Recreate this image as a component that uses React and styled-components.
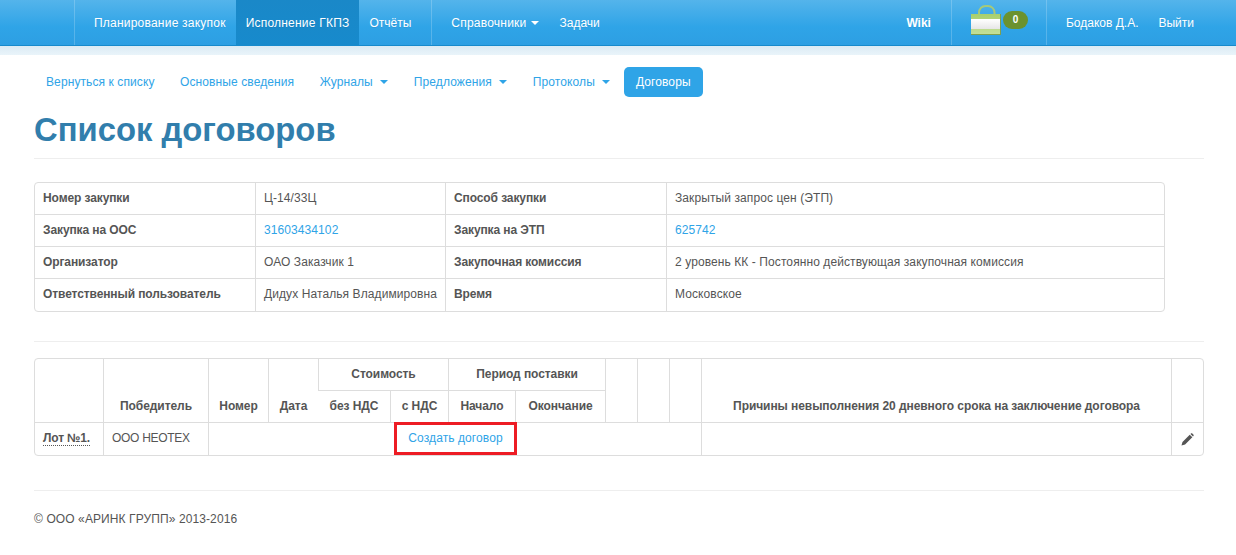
import React from 'react'
import styled, { createGlobalStyle } from 'styled-components'

const GlobalStyle = createGlobalStyle`
  body {
    margin: 0;
    background: #fff;
    font-family: "Liberation Sans", Arial, sans-serif;
    font-size: 12px;
    line-height: 18px;
    color: #555;
  }
`

const Topbar = styled.div`
  display: flex;
  height: 45px;
  padding: 0 32px 0 74px;
  background: linear-gradient(#54b4eb, #2fa4e7 60%, #2d9fe3);
  border-bottom: 1px solid #178acc;
`

const NavGroup = styled.div`
  display: flex;
  border-left: 1px solid ${props => props.$noline ? 'transparent' : 'rgba(255,255,255,.2)'};
  padding: ${props => props.$pad || '0 10px 0 9px'};
  margin-left: ${props => props.$left || 0};
`

const NavItem = styled.a`
  display: flex;
  align-items: center;
  gap: 5px;
  padding: 0 10px;
  color: #fff;
  text-shadow: 0 1px 0 rgba(0,0,0,.08);
  background: ${props => props.$active ? 'linear-gradient(#1a88c8, #178acc)' : 'none'};
  font-weight: ${props => props.$bold ? 'bold' : 'normal'};
  letter-spacing: ${props => props.$wide ? '.22px' : 'normal'};
`

const Caret = styled.span`
  display: inline-block;
  width: 0;
  height: 0;
  border-left: 4px solid transparent;
  border-right: 4px solid transparent;
  border-top: 4px solid ${props => props.$color || '#fff'};
`

const Cart = styled.div`
  display: flex;
  align-items: center;
  padding: 0 18px 0 19px;
  border-left: 1px solid rgba(255,255,255,.2);
  border-right: 1px solid rgba(255,255,255,.2);
`

const Bag = styled.svg`
  margin-bottom: 4px;
`

const CartBadge = styled.span`
  width: 25px;
  height: 18px;
  margin: 0 0 5px 1px;
  border-radius: 9px;
  background: #6b922f;
  color: #fff;
  font-size: 10px;
  font-weight: bold;
  line-height: 17px;
  text-align: center;
`

const Band = styled.div`
  height: 9px;
  background: linear-gradient(#dcebf4, #e9f4fa);
`

const Container = styled.div`
  padding: 12px 32px 0 34px;
`

const Pills = styled.div`
  display: flex;
  gap: 1.5px;
`

const Pill = styled.a`
  display: flex;
  align-items: center;
  gap: 7.5px;
  height: 30px;
  padding: 0 12px;
  border-radius: 5px;
  letter-spacing: .1px;
  color: ${props => props.$active ? '#fff' : '#2fa4e7'};
  background: ${props => props.$active ? '#2fa4e7' : 'none'};
`

const Title = styled.h1`
  margin: 14px 0 0;
  padding-bottom: 10px;
  border-bottom: 1px solid #eee;
  color: #317eac;
  font-size: 32.8px;
  font-weight: bold;
  line-height: 37px;
`

const Table = styled.table`
  width: ${props => props.$width}px;
  table-layout: fixed;
  border-collapse: separate;
  border-spacing: 0;
  border: 1px solid #ddd;
  border-radius: 4px;
`

const Cell = styled.td`
  height: 32px;
  padding: 0 8px 2px;
  box-sizing: border-box;
  border-left: 1px solid #ddd;
  border-bottom: 1px solid #ddd;
  tbody tr:last-child > & { border-bottom: 0; }
  &:first-child { border-left: 0; }
  font-weight: ${props => props.$bold ? 'bold' : 'normal'};
  letter-spacing: ${props => props.$tight ? '-.3px' : props.$bold ? '-.1px' : '.09px'};
  text-align: ${props => props.$align || 'left'};
  vertical-align: middle;
  white-space: nowrap;
`

const HeadCell = styled.th`
  height: 32px;
  padding: 0 8px 7px;
  box-sizing: border-box;
  border-left: 1px solid #ddd;
  border-bottom: 1px solid #ddd;
  &:first-child { border-left: 0; }
  letter-spacing: -.07px;
  text-align: center;
  vertical-align: bottom;
  white-space: nowrap;
`

const Link = styled.a`
  color: #2fa4e7;
`

const InfoBlock = styled.div`
  margin-top: 23px;
`

const Rule = styled.div`
  height: 1px;
  background: #eee;
  margin: ${props => props.$margin};
`

const LotName = styled.span`
  font-weight: bold;
  letter-spacing: -.15px;
  border-bottom: 1px dotted #555;
`

const ActionCell = styled(Cell)`
  padding: 0 0 0 185px;
`

const Marked = styled.span`
  display: inline-block;
  box-sizing: border-box;
  width: 123px;
  height: 33px;
  margin: -2px 0 0;
  border: 3px solid #ed1c24;
  text-align: center;
  line-height: 27px;
`

const Footer = styled.div`
  margin-top: 19px;
  letter-spacing: .1px;
  color: #555;
`

const Pencil = styled.svg`
  display: block;
  margin: 3px 0 0 1px;
`

const BagIcon = () => (
  <Bag width="31" height="31" viewBox="0 0 31 31">
    <defs>
      <linearGradient id="bagBody" x1="0" y1="0" x2="0" y2="1">
        <stop offset="0" stopColor="#a8cf6c" />
        <stop offset="1" stopColor="#c4e09a" />
      </linearGradient>
      <linearGradient id="bagLabel" x1="0" y1="0" x2="0" y2="1">
        <stop offset="0" stopColor="#ffffff" />
        <stop offset="1" stopColor="#e6e6e6" />
      </linearGradient>
    </defs>
    <path d="M8 10 V7.5 A6.5 6.5 0 0 1 14.5 1 H17 A6.5 6.5 0 0 1 23.5 7.5 V10" fill="none" stroke="#a5c97a" strokeWidth="2" />
    <rect x="0" y="9" width="30" height="21" fill="url(#bagBody)" />
    <rect x="0" y="14" width="30" height="10" fill="url(#bagLabel)" />
    <rect x="0" y="29" width="30" height="1" fill="#7f9f4e" />
    <rect x="29" y="9" width="1" height="21" fill="#7f9f4e" />
  </Bag>
)

const PencilIcon = () => (
  <Pencil width="13" height="13" viewBox="0 0 14 14">
    <path d="M0.5 13.5 L1.6 9.6 L9.4 1.8 L12.2 4.6 L4.4 12.4 Z M10.2 1 L11 0.4 Q11.6 0 12.2 0.5 L13.5 1.8 Q14 2.4 13.5 3 L12.9 3.8 Z" fill="#555" />
  </Pencil>
)

export default function App() {
  return (
    <>
      <GlobalStyle />
      <Topbar>
        <NavGroup>
          <NavItem $wide>Планирование закупок</NavItem>
          <NavItem $wide $active>Исполнение ГКПЗ</NavItem>
          <NavItem>Отчёты</NavItem>
        </NavGroup>
        <NavGroup $pad="0 0 0 9px">
          <NavItem $wide>Справочники <Caret /></NavItem>
          <NavItem>Задачи</NavItem>
        </NavGroup>
        <NavGroup $noline $pad="0" $left="auto">
          <NavItem $bold>Wiki</NavItem>
        </NavGroup>
        <NavGroup $noline $pad="0 0 0 9px">
          <Cart>
            <BagIcon />
            <CartBadge>0</CartBadge>
          </Cart>
        </NavGroup>
        <NavGroup $noline $pad="0 0 0 8px">
          <NavItem>Бодаков Д.А.</NavItem>
          <NavItem>Выйти</NavItem>
        </NavGroup>
      </Topbar>
      <Band />
      <Container>
        <Pills>
          <Pill>Вернуться к списку</Pill>
          <Pill>Основные сведения</Pill>
          <Pill>Журналы <Caret $color="#2fa4e7" /></Pill>
          <Pill>Предложения <Caret $color="#2fa4e7" /></Pill>
          <Pill>Протоколы <Caret $color="#2fa4e7" /></Pill>
          <Pill $active>Договоры</Pill>
        </Pills>
        <Title>Список договоров</Title>

        <InfoBlock>
          <Table $width={1131}>
            <colgroup>
              <col width="220" />
              <col width="190" />
              <col width="221" />
              <col />
            </colgroup>
            <tbody>
              <tr>
                <Cell $bold>Номер закупки</Cell>
                <Cell>Ц-14/33Ц</Cell>
                <Cell $bold>Способ закупки</Cell>
                <Cell>Закрытый запрос цен (ЭТП)</Cell>
              </tr>
              <tr>
                <Cell $bold>Закупка на ООС</Cell>
                <Cell><Link>31603434102</Link></Cell>
                <Cell $bold>Закупка на ЭТП</Cell>
                <Cell><Link>625742</Link></Cell>
              </tr>
              <tr>
                <Cell $bold>Организатор</Cell>
                <Cell>ОАО Заказчик 1</Cell>
                <Cell $bold>Закупочная комиссия</Cell>
                <Cell>2 уровень КК - Постоянно действующая закупочная комиссия</Cell>
              </tr>
              <tr>
                <Cell $bold>Ответственный пользователь</Cell>
                <Cell>Дидух Наталья Владимировна</Cell>
                <Cell $bold>Время</Cell>
                <Cell>Московское</Cell>
              </tr>
            </tbody>
          </Table>
        </InfoBlock>

        <Rule $margin="29px 0 16px" />

        <Table $width={1170}>
          <colgroup>
            <col width="68" />
            <col width="105" />
            <col width="60" />
            <col width="50" />
            <col width="72" />
            <col width="58" />
            <col width="67" />
            <col width="90" />
            <col width="32" />
            <col width="32" />
            <col width="32" />
            <col width="470" />
            <col />
          </colgroup>
          <thead>
            <tr>
              <HeadCell rowSpan={2} />
              <HeadCell rowSpan={2}>Победитель</HeadCell>
              <HeadCell rowSpan={2}>Номер</HeadCell>
              <HeadCell rowSpan={2}>Дата</HeadCell>
              <HeadCell colSpan={2}>Стоимость</HeadCell>
              <HeadCell colSpan={2}>Период поставки</HeadCell>
              <HeadCell rowSpan={2} />
              <HeadCell rowSpan={2} />
              <HeadCell rowSpan={2} />
              <HeadCell rowSpan={2}>Причины невыполнения 20 дневного срока на заключение договора</HeadCell>
              <HeadCell rowSpan={2} />
            </tr>
            <tr>
              <HeadCell>без НДС</HeadCell>
              <HeadCell>с НДС</HeadCell>
              <HeadCell>Начало</HeadCell>
              <HeadCell>Окончание</HeadCell>
            </tr>
          </thead>
          <tbody>
            <tr>
              <Cell><LotName>Лот №1.</LotName></Cell>
              <Cell $tight>ООО НЕОТЕХ</Cell>
              <ActionCell colSpan={9}>
                <Marked><Link>Создать договор</Link></Marked>
              </ActionCell>
              <Cell />
              <Cell><PencilIcon /></Cell>
            </tr>
          </tbody>
        </Table>

        <Rule $margin="34px 0 0" />
        <Footer>© ООО «АРИНК ГРУПП» 2013-2016</Footer>
      </Container>
    </>
  )
}
